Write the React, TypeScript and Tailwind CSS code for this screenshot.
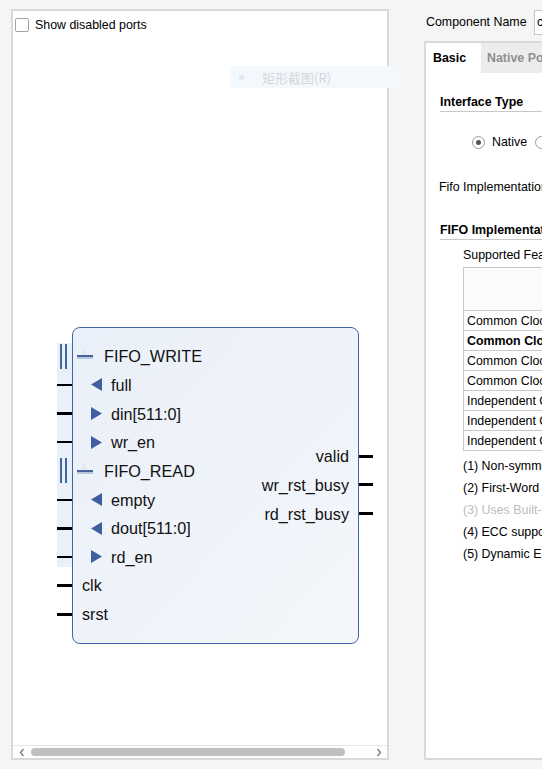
import React from "react";

const Tri = ({ dir }: { dir: "l" | "r" }) => (
  <svg width="11" height="13" viewBox="0 0 11 13" className="shrink-0">
    {dir === "l" ? (
      <polygon points="11,0 11,13 0,6.5" fill="#3e5e9e" />
    ) : (
      <polygon points="0,0 0,13 11,6.5" fill="#3e5e9e" />
    )}
  </svg>
);

const Minus = () => (
  <div className="relative h-[16px] w-[16px] shrink-0">
    <div className="absolute left-[7px] top-[1px] h-[5px] w-[1px] bg-[#e2e2e2]" />
    <div className="absolute left-[5px] top-[5px] h-[1px] w-[5px] bg-[#e2e2e2]" />
    <div className="absolute left-0 top-[7px] h-[2px] w-[16px] bg-[#46639a]" />
    <div className="absolute left-0 top-[9px] h-[2px] w-[16px] bg-[#b6c7e2]" />
  </div>
);

type LeftRow =
  | { kind: "bus"; label: string }
  | { kind: "pin"; label: string; dir: "l" | "r"; thick: boolean }
  | { kind: "plain"; label: string };

const leftRows: LeftRow[] = [
  { kind: "bus", label: "FIFO_WRITE" },
  { kind: "pin", label: "full", dir: "l", thick: false },
  { kind: "pin", label: "din[511:0]", dir: "r", thick: true },
  { kind: "pin", label: "wr_en", dir: "r", thick: false },
  { kind: "bus", label: "FIFO_READ" },
  { kind: "pin", label: "empty", dir: "l", thick: false },
  { kind: "pin", label: "dout[511:0]", dir: "l", thick: true },
  { kind: "pin", label: "rd_en", dir: "r", thick: false },
  { kind: "plain", label: "clk" },
  { kind: "plain", label: "srst" },
];

const rightRows = ["valid", "wr_rst_busy", "rd_rst_busy"];

const Block = () => (
  <div className="absolute left-[44px] top-[316px] flex font-['Liberation_Sans',Arial,sans-serif] text-[16.2px] text-[#111]">
    {/* left pins */}
    <div className="relative w-[15px] pt-[15px]">
      <div className="absolute left-0 top-[16px] h-[224px] w-[15px] bg-[#e9f0f9]" />
      {leftRows.map((r, i) => (
        <div key={i} className="relative flex h-[28.67px] items-center">
          {r.kind === "bus" ? (
            <div className="flex h-[25px] gap-[3px] pl-[3px]">
              <div className="h-full w-[2px] bg-[#3d68a0]" />
              <div className="h-full w-[2px] bg-[#3d68a0]" />
            </div>
          ) : (
            <div
              className={
                r.kind === "pin" && !r.thick
                  ? "h-[2px] w-full bg-black"
                  : "h-[3px] w-full bg-black"
              }
            />
          )}
        </div>
      ))}
    </div>
    {/* box */}
    <div className="flex h-[317px] w-[287px] justify-between rounded-[8px] border border-[#4265a6] bg-gradient-to-br from-[#eaf0f9] to-[#f4f6fa]">
      <div className="pt-[14px]">
        {leftRows.map((r, i) => (
          <div key={i} className="flex h-[28.67px] items-center leading-none">
            {r.kind === "bus" && (
              <>
                <div className="ml-[4px]">
                  <Minus />
                </div>
                <span className="ml-[11px]">{r.label}</span>
              </>
            )}
            {r.kind === "pin" && (
              <>
                <div className="ml-[18px]">
                  <Tri dir={r.dir} />
                </div>
                <span className="ml-[9px]">{r.label}</span>
              </>
            )}
            {r.kind === "plain" && <span className="ml-[9px]">{r.label}</span>}
          </div>
        ))}
      </div>
      <div className="pr-[9px] pt-[114px]">
        {rightRows.map((l) => (
          <div key={l} className="flex h-[28.67px] items-center justify-end leading-none">
            {l}
          </div>
        ))}
      </div>
    </div>
    {/* right pins */}
    <div className="w-[14px] pt-[115px]">
      {rightRows.map((l) => (
        <div key={l} className="flex h-[28.67px] items-center">
          <div className="h-[3px] w-full bg-black" />
        </div>
      ))}
    </div>
  </div>
);

const tableRows = [
  "Common Clock Block RAM",
  "Common Clock Distributed RAM",
  "Common Clock Shift Register",
  "Common Clock Builtin FIFO",
  "Independent Clocks Block RAM",
  "Independent Clocks Distributed RAM",
  "Independent Clocks Builtin FIFO",
];

const notes = [
  { t: "(1) Non-symmetric aspect ratios", dim: false },
  { t: "(2) First-Word Fall-Through", dim: false },
  { t: "(3) Uses Built-in FIFO primitives", dim: true },
  { t: "(4) ECC support", dim: false },
  { t: "(5) Dynamic Error Injection", dim: false },
];

export default function App() {
  return (
    <div className="relative flex h-[769px] w-[542px] overflow-hidden bg-[#f5f5f5] font-['Liberation_Sans',Arial,sans-serif] text-[12.4px] text-black">
      {/* Left panel */}
      <div className="ml-[11px] mt-[9px] flex h-[751px] w-[378px] shrink-0 flex-col border-2 border-[#d9d9d9] bg-white">
        <div className="relative flex-1">
          <div className="ml-[2px] mt-[7px] flex h-[14px] items-center">
            <div className="h-[14px] w-[14px] rounded-[2px] border border-[#a3a3a3] bg-white" />
            <span className="ml-[6px] leading-none">Show disabled ports</span>
          </div>
          <Block />
        </div>
        <div className="flex h-[13px] items-center border-t border-[#e6e6e6] bg-white">
          <svg width="6" height="9" viewBox="0 0 6 9" className="ml-[6px]">
            <polyline points="4.5,1 1.5,4.5 4.5,8" fill="none" stroke="#808080" strokeWidth="1.4" />
          </svg>
          <div className="ml-[6px] h-[8px] w-[314px] rounded-full bg-[#c0c0c0]" />
          <div className="flex-1" />
          <svg width="6" height="9" viewBox="0 0 6 9" className="mr-[5px]">
            <polyline points="1.5,1 4.5,4.5 1.5,8" fill="none" stroke="#808080" strokeWidth="1.4" />
          </svg>
        </div>
      </div>

      {/* Right side */}
      <div className="ml-[35px] flex w-[260px] shrink-0 flex-col">
        <div className="mt-[10px] flex h-[25px] items-center">
          <span className="ml-[2px] w-[108px] shrink-0 leading-none">Component Name</span>
          <div className="flex h-[25px] w-[150px] items-center border border-[#c4c4c4] bg-white pl-[2px]">
            <span className="leading-none">cmd_fifo</span>
          </div>
        </div>
        <div className="mt-[6px] flex h-[719px] flex-col border-b-2 border-l-2 border-t-2 border-[#dadada] bg-white">
          <div className="flex h-[30px] bg-[#ececec]">
            <div className="flex w-[55px] items-center bg-white pl-[7px] font-bold leading-none">Basic</div>
            <div className="flex items-center pl-[6px] font-bold leading-none text-[#8f8f8f]">Native Ports</div>
          </div>
          <div className="flex flex-col pl-[14px]">
            <div className="mt-[21px] h-[18px] border-b border-[#c8c8c8] pb-[1px] font-bold leading-[16px]">
              Interface Type
            </div>
            <div className="mt-[22px] flex h-[16px] items-center">
              <div className="ml-[32px] flex h-[13px] w-[13px] items-center justify-center rounded-full border border-[#9a9a9a] bg-white">
                <div className="h-[5px] w-[5px] rounded-full bg-[#555]" />
              </div>
              <span className="ml-[7px] leading-none">Native</span>
              <div className="ml-[8px] h-[13px] w-[13px] rounded-full border border-[#9a9a9a] bg-white" />
              <span className="ml-[7px] leading-none">AXI Memory Mapped</span>
            </div>
            <div className="-ml-[1px] mt-[29px] h-[16px] leading-[16px]">Fifo Implementation</div>
            <div className="mt-[27px] h-[18px] border-b border-[#c8c8c8] pb-[1px] font-bold leading-[16px]">
              FIFO Implementation Options
            </div>
            <div className="ml-[23px] mt-[7px] h-[16px] leading-[16px]">Supported Features</div>
            <div className="ml-[23px] mt-[4px]">
              <table className="w-[300px] border-collapse">
                <tbody>
                  <tr className="h-[43px]">
                    <td className="border border-[#c8c8c8] bg-[#fbfbfb]" />
                  </tr>
                  {tableRows.map((r, i) => (
                    <tr key={r} className="h-[20px]">
                      <td
                        className={
                          "whitespace-nowrap border border-[#c8c8c8] px-[3px] py-0 leading-[18px]" +
                          (i === 1 ? " font-bold" : "")
                        }
                      >
                        {r}
                      </td>
                    </tr>
                  ))}
                </tbody>
              </table>
            </div>
            <div className="ml-[23px] mt-[4px] flex flex-col">
              {notes.map((n) => (
                <div
                  key={n.t}
                  className={"h-[22px] whitespace-nowrap leading-[22px]" + (n.dim ? " text-[#bdbdbd]" : "")}
                >
                  {n.t}
                </div>
              ))}
            </div>
          </div>
        </div>
      </div>

      {/* ghost tooltip overlay */}
      <div className="absolute left-[230px] top-[66px] flex h-[22px] w-[170px] items-center bg-[#f3f8fd]">
        <div className="ml-[9px] h-[5px] w-[5px] rounded-full bg-[#dfe6ee]" />
        <span className="ml-[18px] font-['Noto_Sans_CJK_SC','Liberation_Sans',sans-serif] text-[13px] leading-none text-[#d3d7db]">
          矩形截图(R)
        </span>
      </div>
    </div>
  );
}
